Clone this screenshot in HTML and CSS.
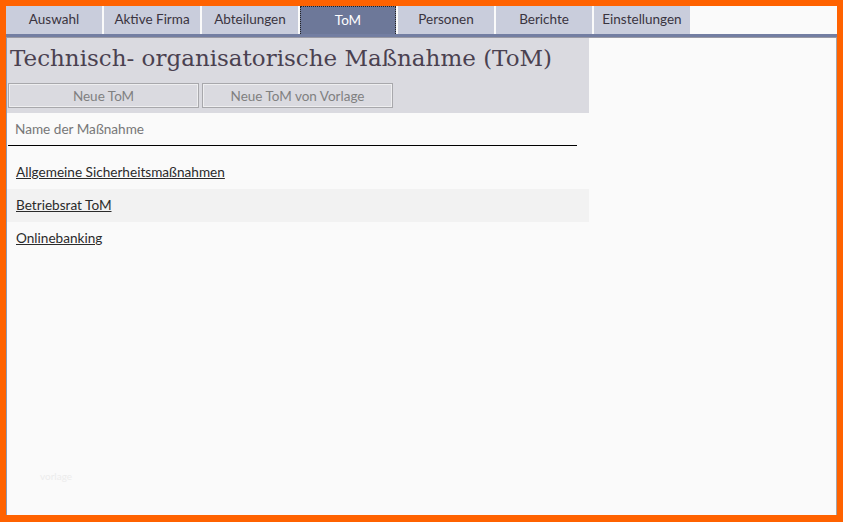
FILE: index.html
```html
<!DOCTYPE html>
<html lang="de">
<head>
  <meta charset="UTF-8" />
  <title>ToM - Technisch-organisatorische Maßnahmen</title>
  <link rel="stylesheet" href="styles.css">
</head>
<body>
  <div class="page">
    <ul class="tabs">
      <li class="tab">Auswahl</li>
      <li class="tab">Aktive Firma</li>
      <li class="tab">Abteilungen</li>
      <li class="tab active">ToM</li>
      <li class="tab">Personen</li>
      <li class="tab">Berichte</li>
      <li class="tab">Einstellungen</li>
    </ul>
    <div class="tab-bar"></div>

    <div class="content">
      <div class="head">
        <h1>Technisch- organisatorische Maßnahme (ToM)</h1>
        <div class="actions">
          <button class="btn">Neue ToM</button>
          <button class="btn">Neue ToM von Vorlage</button>
        </div>
      </div>

      <table class="measures">
        <thead>
          <tr><th>Name der Maßnahme</th></tr>
        </thead>
        <tbody>
          <tr class="first"><td><a href="#">Allgemeine Sicherheitsmaßnahmen</a></td></tr>
          <tr class="alt"><td><a href="#">Betriebsrat ToM</a></td></tr>
          <tr><td><a href="#">Onlinebanking</a></td></tr>
        </tbody>
      </table>

      <div class="watermark">vorlage</div>
    </div>
  </div>
</body>
</html>
```

FILE: styles.css
```css
:root {
  --frame: #ff6200;
  --page-bg: #fafafa;
  --tab-bg: #c9cddc;
  --tab-active: #6d7899;
  --bar: #737ea2;
  --head-bg: #dadae0;
  --title: #4a4150;
  --text: #2b2b2b;
  --muted: #808080;
}

* {
  box-sizing: border-box;
  margin: 0;
  padding: 0;
}

html, body { height: 100%; }

body {
  background: var(--frame);
  padding: 6px 6px 7px 6px;
  font-family: 'Lato', 'Open Sans', sans-serif;
  font-size: 13.6px;
  color: var(--text);
}

.page {
  height: 100%;
  background: var(--page-bg);
  display: flex;
  flex-direction: column;
}

/* top navigation */
.tabs {
  list-style: none;
  display: flex;
  gap: 2px;
  height: 28px;
}
.tab {
  width: 96px;
  background: var(--tab-bg);
  color: #3a3440;
  text-align: center;
  line-height: 27px;
  font-size: 13.5px;
}
.tab.active {
  background: var(--tab-active);
  color: #fff;
  border: 1px dotted #222;
  border-bottom: none;
  line-height: 26px;
}
.tab-bar {
  height: 4px;
  background: var(--bar);
  border-bottom: 1px solid #9a9aa4;
}

.content {
  flex: 1;
  border-left: 1px solid #8e98b0;
  border-right: 1px solid #a4a4a8;
  position: relative;
}

/* page heading + buttons */
.head {
  width: 582px;
  background: var(--head-bg);
  padding: 3px 0 5px 1px;
}
h1 {
  font-family: 'DejaVu Serif', 'Liberation Serif', serif;
  font-weight: normal;
  font-size: 23px;
  color: var(--title);
  padding-left: 2px;
  line-height: 35px;
  margin-bottom: 7px;
}
.actions {
  display: flex;
  gap: 3px;
}
.btn {
  width: 191px;
  height: 25px;
  background: var(--head-bg);
  border: 1px solid #a8a8ac;
  box-shadow: inset 0 0 0 1px #eeeef0;
  color: var(--muted);
  font-family: inherit;
  font-size: 13.5px;
}

/* list of measures */
.measures {
  width: 582px;
  border-collapse: collapse;
}
.measures th {
  text-align: left;
  font-weight: normal;
  color: #777;
  padding: 0 0 1px 8px;
  height: 33px;
  line-height: 32px;
  background: linear-gradient(#000, #000) no-repeat 1px 100% / 569px 1px;
}
.measures td {
  vertical-align: top;
  height: 33px;
  line-height: 32px;
  padding: 0 0 0 9px;
}
.measures tr.first td { height: 43px; padding-top: 10px; }
.measures tr.alt td { background: #f2f2f2; }
.measures a {
  color: var(--text);
}

.watermark {
  position: absolute;
  left: 33px;
  bottom: 33px;
  color: #ececec;
  font-size: 10px;
}
```
